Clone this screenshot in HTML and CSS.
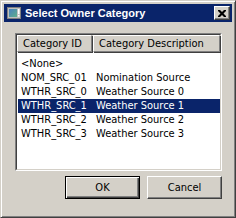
FILE: index.html
```html
<!DOCTYPE html>
<html lang="en">

<head>
    <meta charset="UTF-8">
    <title>Select Owner Category</title>
    <link rel="stylesheet" href="styles.css">
</head>

<body>
    <div id="dialog">
        <div class="titlebar">
            <svg class="appicon" width="14" height="12" viewBox="0 0 14 12">
                <defs>
                    <linearGradient id="g" x1="0" y1="0" x2="1" y2="1">
                        <stop offset="0" stop-color="#4a7fc0"/>
                        <stop offset="1" stop-color="#5fb08a"/>
                    </linearGradient>
                </defs>
                <rect x="0.5" y="0.5" width="13" height="11" fill="#c0c0c0" stroke="#808080"/>
                <rect x="2" y="2" width="8" height="8" fill="url(#g)"/>
                <rect x="11" y="2" width="1.5" height="5" fill="#fff"/>
                <rect x="11" y="8" width="1.5" height="1.5" fill="#fff"/>
            </svg>
            <span class="title">Select Owner Category</span>
            <span class="close">
                <svg width="8" height="7" viewBox="0 0 8 7">
                    <path d="M0 0h2l2 2 2-2h2v1l-2.5 2.5 2.5 2.5v1h-2l-2-2-2 2h-2v-1l2.5-2.5-2.5-2.5z" fill="#000"/>
                </svg>
            </span>
        </div>
        <div class="content">
            <div class="listview">
                <div class="listinner">
                    <div class="header">
                        <span class="col1">Category ID</span>
                        <span class="col2">Category Description</span>
                    </div>
                    <div class="rows">
                        <div class="row"><span class="c1">&lt;None&gt;</span><span class="c2"></span></div>
                        <div class="row"><span class="c1">NOM_SRC_01</span><span class="c2">Nomination Source</span></div>
                        <div class="row"><span class="c1">WTHR_SRC_0</span><span class="c2">Weather Source 0</span></div>
                        <div class="row selected"><span class="c1">WTHR_SRC_1</span><span class="c2">Weather Source 1</span></div>
                        <div class="row"><span class="c1">WTHR_SRC_2</span><span class="c2">Weather Source 2</span></div>
                        <div class="row"><span class="c1">WTHR_SRC_3</span><span class="c2">Weather Source 3</span></div>
                    </div>
                </div>
            </div>
            <div class="buttons">
                <button class="btn default">OK</button>
                <button class="btn">Cancel</button>
            </div>
        </div>
    </div>
</body>

</html>
```

FILE: styles.css
```css
body {
    margin: 0;
    font-family: "DejaVu Sans Condensed", "Liberation Sans", sans-serif;
    font-size: 11px;
}

#dialog {
    width: 236px;
    height: 218px;
    box-sizing: border-box;
    background: #d4d0c8;
    border: 1px solid;
    border-color: #d4d0c8 #404040 #404040 #d4d0c8;
    box-shadow: inset 1px 1px 0 #fff, inset -1px -1px 0 #808080;
    padding: 3px;
    display: flex;
    flex-direction: column;
}

.titlebar {
    height: 18px;
    background: #0a246a;
    color: #fff;
    display: flex;
    align-items: center;
    padding: 0 2px 0 2px;
}

.appicon {
    margin-right: 4px;
    margin-left: 1px;
}

.title {
    font-family: "Liberation Sans", sans-serif;
    font-weight: bold;
    font-size: 11px;
    flex: 1;
}

.close {
    width: 16px;
    height: 14px;
    box-sizing: border-box;
    background: #d4d0c8;
    border: 1px solid;
    border-color: #fff #404040 #404040 #fff;
    box-shadow: inset -1px -1px 0 #808080;
    display: flex;
    align-items: center;
    justify-content: center;
}

.content {
    flex: 1;
    padding: 11px 10px 14px 11px;
    display: flex;
    flex-direction: column;
}

.listview {
    height: 138px;
    box-sizing: border-box;
    border: 1px solid;
    border-color: #808080 #fff #fff #808080;
}

.listinner {
    height: 100%;
    box-sizing: border-box;
    border: 1px solid;
    border-color: #404040 #d4d0c8 #d4d0c8 #404040;
    background: #fff;
}

.header {
    display: flex;
    height: 17px;
    background: #d4d0c8;
}

.header span {
    box-sizing: border-box;
    height: 17px;
    line-height: 15px;
    padding-left: 5px;
    border: 1px solid;
    border-color: #fff #808080 #808080 #fff;
    box-shadow: 1px 1px 0 #404040;
    color: #000;
}

.header .col1 {
    width: 75px;
}

.header .col2 {
    width: 127px;
    margin-left: 1px;
}

.rows {
    padding-top: 5px;
}

.row {
    display: flex;
    height: 14px;
    line-height: 14px;
    margin-left: 1px;
}

.row .c1 {
    width: 76px;
    padding-left: 3px;
    box-sizing: border-box;
}

.row .c2 {
    padding-left: 2px;
}

.row.selected {
    background: #0a246a;
    color: #fff;
}

.buttons {
    display: flex;
    justify-content: flex-end;
    gap: 7px;
    margin-top: 5px;
}

.btn {
    width: 75px;
    height: 23px;
    box-sizing: border-box;
    background: #d4d0c8;
    font-family: "DejaVu Sans Condensed", "Liberation Sans", sans-serif;
    font-size: 11px;
    color: #000;
    border: 1px solid;
    border-color: #fff #404040 #404040 #fff;
    box-shadow: inset -1px -1px 0 #808080;
    padding: 0;
}

.btn.default {
    border: 1px solid #000;
    box-shadow: inset 1px 1px 0 #fff, inset -1px -1px 0 #404040, inset -2px -2px 0 #808080;
}
```
